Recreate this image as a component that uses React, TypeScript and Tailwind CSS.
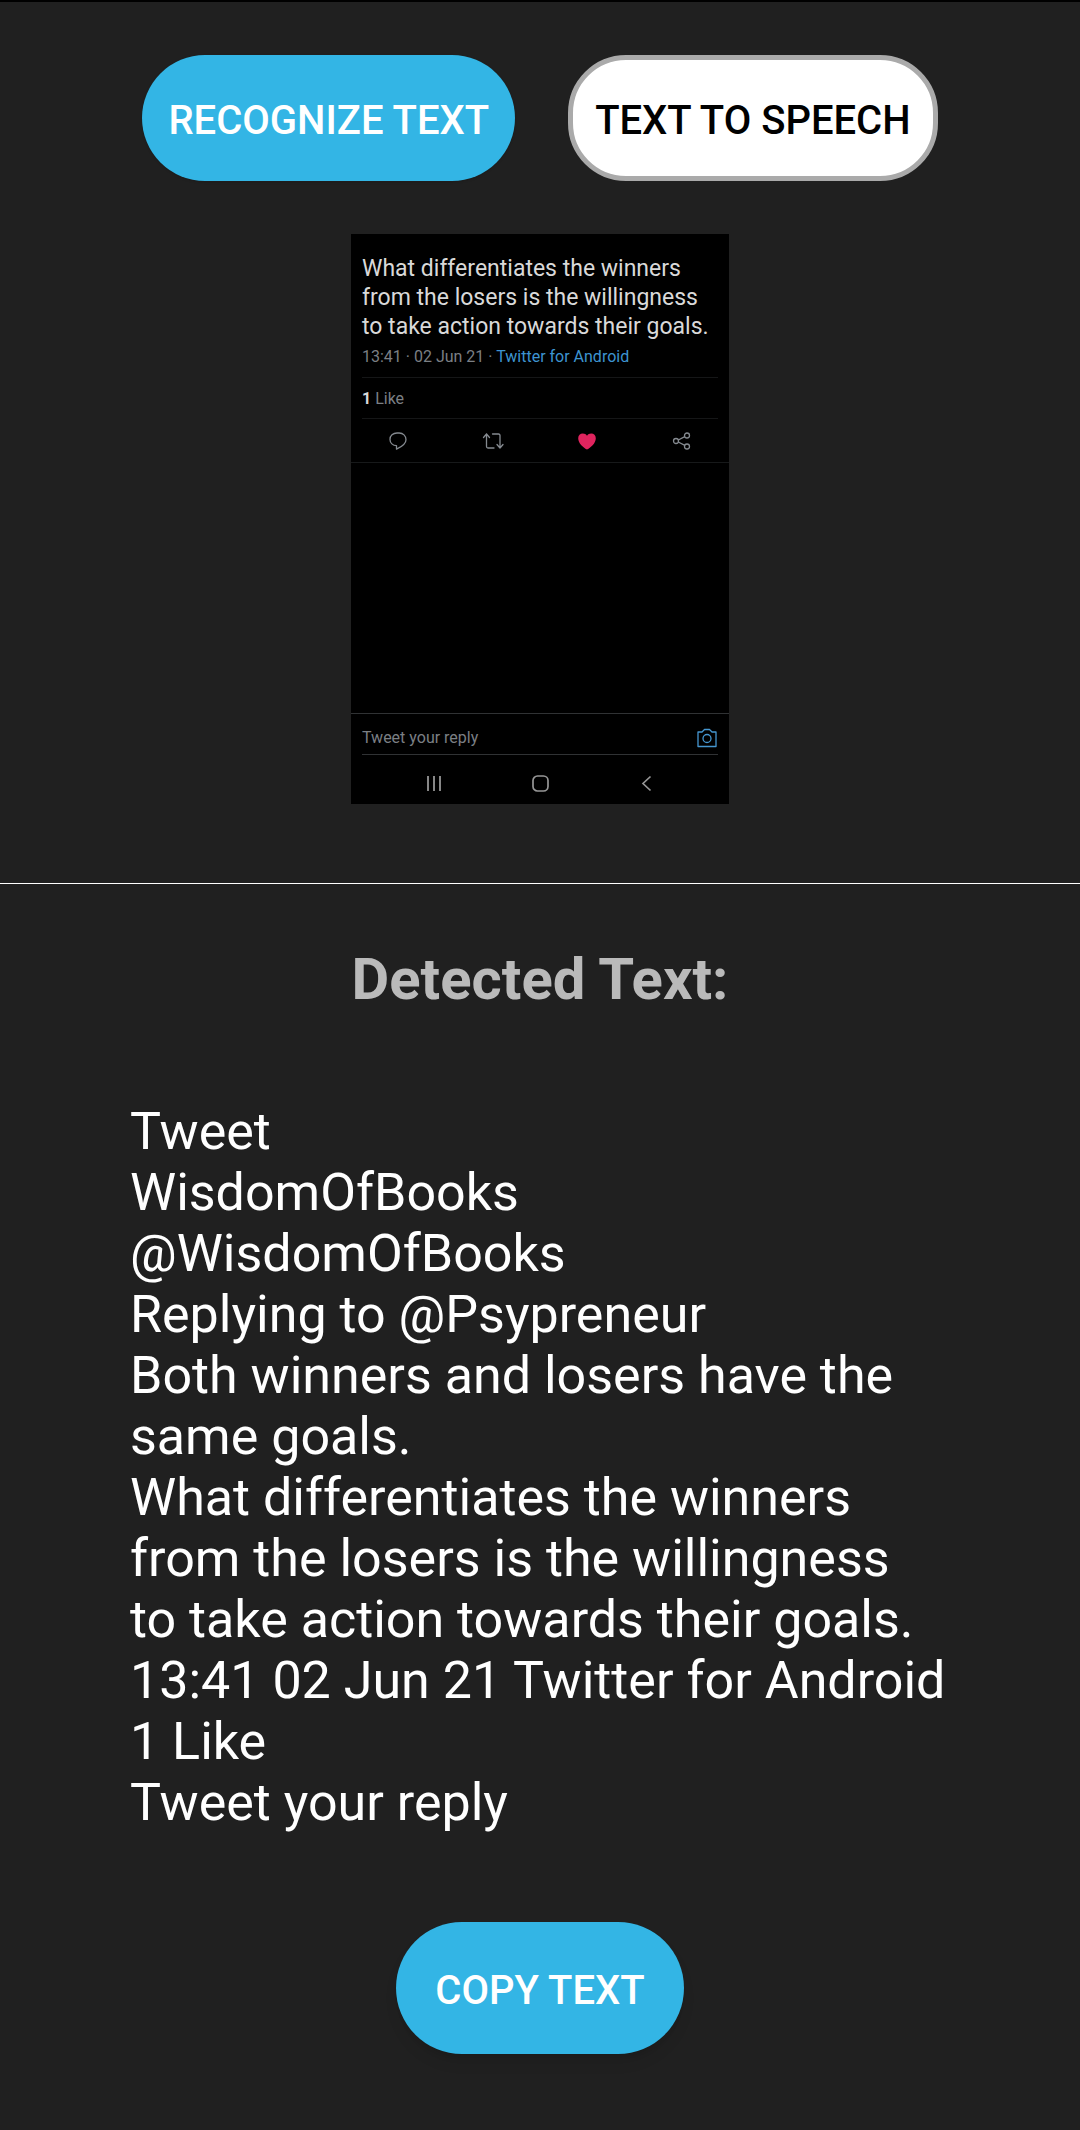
import React from "react";

const detectedLines = [
  "Tweet",
  "WisdomOfBooks",
  "@WisdomOfBooks",
  "Replying to @Psypreneur",
  "Both winners and losers have the",
  "same goals.",
  "What differentiates the winners",
  "from the losers is the willingness",
  "to take action towards their goals.",
  "13:41 02 Jun 21 Twitter for Android",
  "1 Like",
  "Tweet your reply",
];

function ReplyIcon() {
  return (
    <svg width="20" height="20" viewBox="0 0 20 20" fill="none" stroke="#858a90" strokeWidth="1.3" strokeLinejoin="round">
      <path d="M8.500 14.600v3.600c4.500-2 9.500-5 9.500-9.400 0-4-3-6.800-6.800-6.800H9C5 2 2 4.800 2 8.400c0 3.700 2.800 6.200 6.500 6.200z" />
    </svg>
  );
}

function RetweetIcon() {
  return (
    <svg width="22" height="20" viewBox="0 0 22 20" fill="none" stroke="#858a90" strokeWidth="1.3" strokeLinecap="round" strokeLinejoin="round">
      <path d="M1.500 6.500 4.500 3l3 3.500M4.500 3v12.500q0 1.500 1.500 1.500h6" />
      <path d="M15 13.500l3 3.500 3-3.500M18 17V4.500q0-1.500-1.500-1.500h-6" />
    </svg>
  );
}

function HeartIcon() {
  return (
    <svg width="20" height="20" viewBox="0 0 20 20" fill="#e0245e">
      <path d="M10 18.500C6 16.500 1.200 12 1.200 7.200 1.200 4.400 3.200 2.500 5.800 2.500c1.800 0 3.300.9 4.200 2.200.9-1.300 2.400-2.200 4.200-2.200 2.600 0 4.600 1.900 4.600 4.700C18.800 12 14 16.500 10 18.500z" />
    </svg>
  );
}

function ShareIcon() {
  return (
    <svg width="20" height="20" viewBox="0 0 20 20" fill="none" stroke="#858a90" strokeWidth="1.3">
      <circle cx="4" cy="10" r="2.500" />
      <circle cx="15" cy="4.500" r="2.500" />
      <circle cx="15" cy="15.500" r="2.500" />
      <path d="M6.300 9 12.800 5.700M6.300 11l6.500 3.300" />
    </svg>
  );
}

function CameraIcon() {
  return (
    <svg width="20" height="20" viewBox="0 0 20 20" fill="none" stroke="#4596d0" strokeWidth="1.300" strokeLinejoin="round">
      <path d="M1 4h4l2.500-2.500h5L15 4h4v14.500H1z" />
      <circle cx="10" cy="10.500" r="4" />
    </svg>
  );
}

const actions = [
  { label: "Reply", icon: <ReplyIcon /> },
  { label: "Retweet", icon: <RetweetIcon /> },
  { label: "Like", icon: <HeartIcon /> },
  { label: "Share", icon: <ShareIcon /> },
];

function TweetPreview() {
  return (
    <section className="mt-[53px] flex w-[378px] flex-col bg-black" aria-label="Captured tweet">
      <div className="px-[11px] pt-5">
        <p className="whitespace-nowrap text-[23px] leading-[29px] text-[#d9d9d9]">
          What differentiates the winners
          <br />
          from the losers is the willingness
          <br />
          to take action towards their goals.
        </p>
        <p className="pt-1 pb-2 text-[16px] leading-[24px] text-[#7b7f84]">
          13:41 · 02 Jun 21 · <a href="#source" className="text-[#3d94d1]">Twitter for Android</a>
        </p>
        <p className="border-y border-[#151617] pt-[2px] text-[16px] leading-[38px] text-[#7b7f84]">
          <span className="font-bold text-[#d9d9d9]">1</span> Like
        </p>
      </div>
      <div className="grid h-[44px] grid-cols-4 border-b border-[#17191a]">
        {actions.map((a) => (
          <button key={a.label} aria-label={a.label} className="flex items-center justify-center">
            {a.icon}
          </button>
        ))}
      </div>
      <div className="mt-[250px] border-t border-[#303234] px-[11px]">
        <div className="flex h-[41px] items-center justify-between border-b border-[#303234] pt-2">
          <input
            aria-label="Tweet your reply"
            placeholder="Tweet your reply"
            className="w-[200px] bg-transparent text-[16px] leading-[20px] outline-none placeholder:text-[#7b7f84]"
          />
          <button aria-label="Add photo" className="mr-px">
            <CameraIcon />
          </button>
        </div>
      </div>
      <nav className="flex h-[49px] items-center justify-center gap-[86px] pt-[6px]" aria-label="System">
        <button aria-label="Recent apps">
          <svg width="20" height="20" viewBox="0 0 20 20" stroke="#969696" strokeWidth="1.800">
            <path d="M4 3v15M10 3v15M16 3v15" />
          </svg>
        </button>
        <button aria-label="Home">
          <svg width="20" height="20" viewBox="0 0 20 20" fill="none" stroke="#969696" strokeWidth="1.700">
            <rect x="3" y="3" width="15" height="15" rx="4.500" />
          </svg>
        </button>
        <button aria-label="Back">
          <svg width="20" height="20" viewBox="0 0 20 20" fill="none" stroke="#969696" strokeWidth="1.700">
            <path d="M14.500 3.500 7 10.500l7.500 7" />
          </svg>
        </button>
      </nav>
    </section>
  );
}

export default function App() {
  return (
    <main className="flex min-h-screen flex-col border-t-2 border-black bg-[#202020] font-['Roboto',sans-serif]">
      <section className="flex flex-col items-center border-b border-white pt-[53px] pb-[79px]">
        <div className="flex justify-center gap-[53px]">
          <button className="h-[126px] rounded-[63px] bg-[#33b5e5] px-[26px] pt-[6px] text-[40px] font-medium whitespace-nowrap text-white shadow-sm">
            RECOGNIZE TEXT
          </button>
          <button className="h-[126px] rounded-[58px] border-[5px] border-[#aaaaaa] bg-white px-[22px] pt-[6px] text-[40px] font-medium whitespace-nowrap text-black">
            TEXT TO SPEECH
          </button>
        </div>
        <TweetPreview />
      </section>
      <section className="flex flex-col items-center pt-[60px] pb-[75px]">
        <h1 className="text-[58px] leading-[70px] font-bold text-[#bababa]">Detected Text:</h1>
        <p className="mt-[87px] w-full max-w-[820px] text-[52px] leading-[61px] text-white">
          {detectedLines.map((line) => (
            <span key={line} className="block">
              {line}
            </span>
          ))}
        </p>
        <button className="mt-[89px] h-[132px] rounded-[66px] bg-[#33b5e5] px-[39px] pt-[6px] text-[40px] font-medium whitespace-nowrap text-white shadow-lg">
          COPY TEXT
        </button>
      </section>
    </main>
  );
}
